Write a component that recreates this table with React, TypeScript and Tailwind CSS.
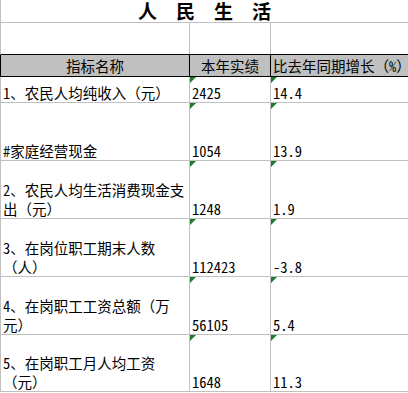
import React from "react";

const FONT = '"Noto Sans Mono CJK SC", "Noto Sans CJK SC", "Liberation Mono", monospace';

type Row = { name: string[]; v: string; g: string; h: string };

const rows: Row[] = [
  { name: ["1、农民人均纯收入（元）"], v: "2425", g: "14.4", h: "h-[26px]" },
  { name: ["#家庭经营现金"], v: "1054", g: "13.9", h: "h-[58px]" },
  { name: ["2、农民人均生活消费现金支", "出（元）"], v: "1248", g: "1.9", h: "h-[58px]" },
  { name: ["3、在岗位职工期末人数", "（人）"], v: "112423", g: "-3.8", h: "h-[58px]" },
  { name: ["4、在岗职工工资总额（万", "元）"], v: "56105", g: "5.4", h: "h-[58px]" },
  { name: ["5、在岗职工月人均工资", "（元）"], v: "1648", g: "11.3", h: "h-[57px]" },
];

function Flag() {
  return (
    <svg className="absolute left-0 top-0" width="6" height="6" viewBox="0 0 6 6">
      <polygon points="0,0 6,0 0,6" fill="#1f7a32" />
    </svg>
  );
}

export default function App() {
  return (
    <div className="w-[408px] h-[393px] bg-white text-black overflow-hidden" style={{ fontFamily: FONT }}>
      {/* Title */}
      <div className="h-[23px] border-l border-b border-[#c0c0c0] flex items-center justify-center">
        <span className="text-[19px] font-bold leading-[22px]" style={{ fontFamily: '"Noto Sans CJK SC", sans-serif' }}>
          人　民　生　活
        </span>
      </div>
      {/* Empty row */}
      <div className="h-[32px] border-l border-[#c0c0c0] grid grid-cols-[189px_81px_1fr] border-b border-b-black">
        <div className="border-r border-[#c0c0c0]" />
        <div className="border-r border-[#c0c0c0]" />
        <div />
      </div>
      {/* Header */}
      <div className="h-[22px] bg-[#c0c0c0] border-l border-b border-black grid grid-cols-[189px_81px_1fr] text-[14.5px] leading-[20px]">
        <div className="border-r border-black flex items-center justify-center">指标名称</div>
        <div className="border-r border-black flex items-center justify-center">本年实绩</div>
        <div className="flex items-center pl-[2px] whitespace-nowrap">比去年同期增长（%）</div>
      </div>
      {/* Data */}
      {rows.map((r, i) => (
        <div
          key={i}
          className={`${r.h} border-l border-b border-[#c0c0c0] grid grid-cols-[189px_81px_1fr] text-[14.5px] leading-[19px]`}
        >
          <div className="border-r border-[#c0c0c0] flex flex-col justify-end pl-[2px] whitespace-nowrap">
            {r.name.map((l, j) => (
              <div key={j}>{l}</div>
            ))}
          </div>
          <div className="relative border-r border-[#c0c0c0] flex items-end pl-[2px]">
            <Flag />
            <span>{r.v}</span>
          </div>
          <div className="relative flex items-end pl-[2px]">
            <Flag />
            <span>{r.g}</span>
          </div>
        </div>
      ))}
    </div>
  );
}
